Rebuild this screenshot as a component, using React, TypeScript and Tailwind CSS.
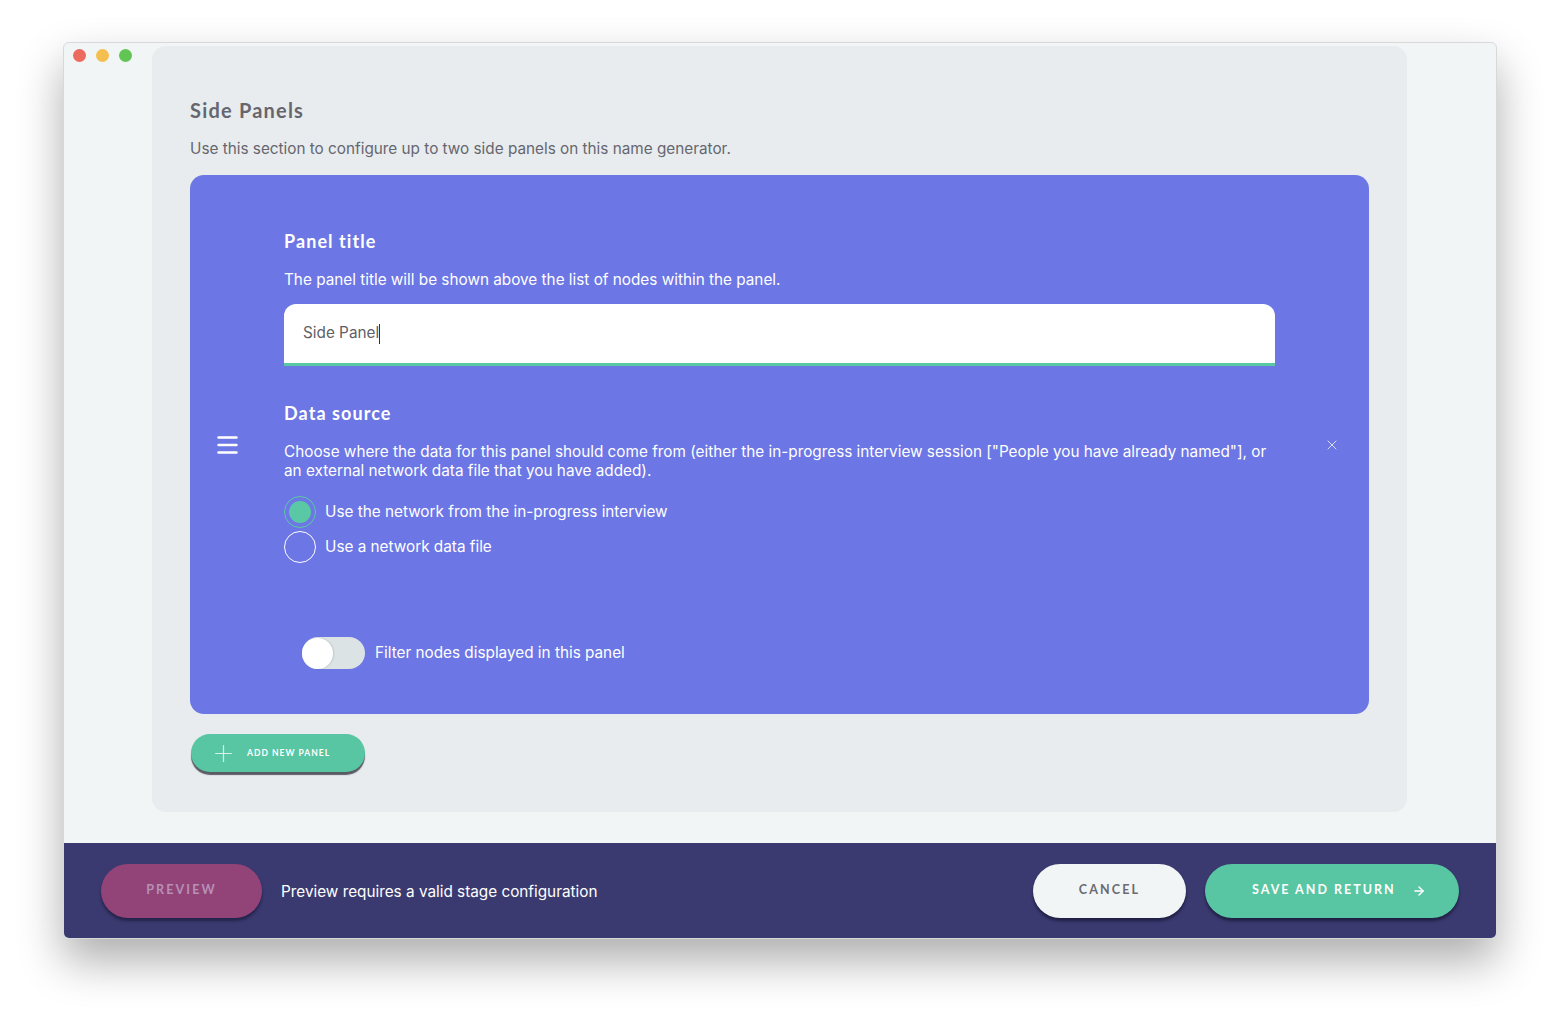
import { X, Plus, ArrowRight } from 'lucide-react'

const heading = "font-['Lato','Noto_Sans',sans-serif] font-bold"
const body = "font-['Inter','Noto_Sans',sans-serif]"

function Radio({ checked, label }: { checked: boolean; label: string }) {
  return (
    <label className="flex items-center gap-[9px] h-[32px]">
      <span
        className={
          checked
            ? 'w-[32px] h-[32px] rounded-full border-[1.5px] border-[#5ac8a5] flex items-center justify-center'
            : 'w-[32px] h-[32px] rounded-full border-[1.5px] border-white'
        }
      >
        {checked && <span className="w-[22px] h-[22px] rounded-full bg-[#5ac8a5]" />}
      </span>
      <span className="text-white text-[15.3px]">{label}</span>
    </label>
  )
}

function Handle() {
  return (
    <svg width="21" height="18" viewBox="0 0 21 18" fill="none" stroke="white" strokeWidth="2.4" strokeLinecap="round">
      <line x1="1.5" y1="1.5" x2="19.5" y2="1.5" />
      <line x1="1.5" y1="9" x2="19.5" y2="9" />
      <line x1="1.5" y1="16.5" x2="19.5" y2="16.5" />
    </svg>
  )
}

export default function App() {
  return (
    <div className={`min-h-screen bg-white pt-[42px] pl-[63px] ${body}`}>
      {/* Window */}
      <div className="relative w-[1434px] h-[897px] rounded-[6px] bg-[#f1f5f6] border border-[#d6d8da] shadow-[0_22px_45px_rgba(0,0,0,0.32)] flex flex-col overflow-hidden">
        {/* Traffic lights */}
        <div className="absolute left-[9px] top-[6px] flex gap-[10px]">
          <span className="w-[13px] h-[13px] rounded-full bg-[#ec6a5e]" />
          <span className="w-[13px] h-[13px] rounded-full bg-[#f4bf4f]" />
          <span className="w-[13px] h-[13px] rounded-full bg-[#61c554]" />
        </div>

        {/* Content */}
        <div className="flex-1 pt-[3px] pl-[88px] pr-[89px]">
          <div className="h-[766px] rounded-[14px] bg-[#e8ecef] px-[38px] pt-[50px]">
            <h2 className={`${heading} text-[20px] leading-[28px] tracking-[0.06em] text-[#66666e]`}>Side Panels</h2>
            <p className="mt-[13px] text-[15.3px] leading-[24px] text-[#66666e]">
              Use this section to configure up to two side panels on this name generator.
            </p>

            {/* Panel */}
            <div className="mt-[14px] h-[539px] rounded-[14px] bg-[#6c76e4] grid grid-cols-[94px_1fr_94px]">
              <div className="flex items-center pl-[27px]">
                <Handle />
              </div>

              <div className="pt-[54px]">
                <h3 className={`${heading} text-[18px] leading-[24px] tracking-[0.06em] text-white`}>Panel title</h3>
                <p className="mt-[15px] text-[15.3px] leading-[24px] text-white">
                  The panel title will be shown above the list of nodes within the panel.
                </p>
                <div className="mt-[12px] h-[62px] rounded-t-[12px] bg-white border-b-[3px] border-[#5ac8a5] flex items-center pl-[19px]">
                  <span className="text-[15.3px] text-[#5f5f66]">Side Panel</span>
                  <span className="w-px h-[20px] bg-[#333]" />
                </div>

                <h3 className={`${heading} mt-[35px] text-[18px] leading-[24px] tracking-[0.06em] text-white`}>Data source</h3>
                <p className="mt-[17px] text-[15.3px] leading-[19px] text-white">
                  Choose where the data for this panel should come from (either the in-progress interview session
                  ["People you have already named"], or an external network data file that you have added).
                </p>
                <div className="mt-[16px] flex flex-col gap-[3px]">
                  <Radio checked label="Use the network from the in-progress interview" />
                  <Radio checked={false} label="Use a network data file" />
                </div>

                <div className="mt-[74px] ml-[18px] flex items-center gap-[10px]">
                  <span className="w-[63px] h-[32px] rounded-full bg-[#dce3e4] flex items-center">
                    <span className="w-[31px] h-[31px] rounded-full bg-white shadow-[1px_0_2px_rgba(0,0,0,0.12)]" />
                  </span>
                  <span className="text-white text-[15.3px]">Filter nodes displayed in this panel</span>
                </div>
              </div>

              <div className="flex items-center justify-end pr-[29px]">
                <X size={16} strokeWidth={1.4} className="text-[#e4e6fa]" />
              </div>
            </div>

            <button className="mt-[20px] ml-px w-[174px] h-[38px] rounded-full bg-[#58c6a2] shadow-[0_3px_1px_#5b5b66] flex items-center pl-[19px]">
              <Plus size={27} strokeWidth={1.1} className="text-[#d7f1e8]" />
              <span className={`${heading} ml-[10px] text-[8.5px] tracking-[0.12em] text-white`}>ADD NEW PANEL</span>
            </button>
          </div>
        </div>

        {/* Footer */}
        <div className="h-[95px] bg-[#3b3a70] flex items-center px-[37px]">
          <button className={`${heading} w-[161px] h-[54px] rounded-full bg-[#924479] shadow-[0_3px_3px_rgba(20,20,50,0.6)] text-[12.5px] tracking-[0.17em] text-[#b790b5]`}>
            PREVIEW
          </button>
          <span className="ml-[19px] pt-[4px] text-[15.3px] text-white">Preview requires a valid stage configuration</span>
          <div className="ml-auto flex gap-[19px]">
            <button className={`${heading} w-[153px] h-[54px] rounded-full bg-[#f1f5f6] shadow-[0_3px_3px_rgba(20,20,50,0.7)] text-[12.5px] tracking-[0.17em] text-[#6a6a72]`}>
              CANCEL
            </button>
            <button className={`${heading} w-[254px] h-[54px] rounded-full bg-[#58c6a2] shadow-[0_3px_3px_rgba(20,20,50,0.7)] text-[12.5px] tracking-[0.16em] text-white flex items-center pl-[47px] gap-[16px]`}>
              SAVE AND RETURN
              <ArrowRight size={14} strokeWidth={2.5} />
            </button>
          </div>
        </div>
      </div>
    </div>
  )
}
